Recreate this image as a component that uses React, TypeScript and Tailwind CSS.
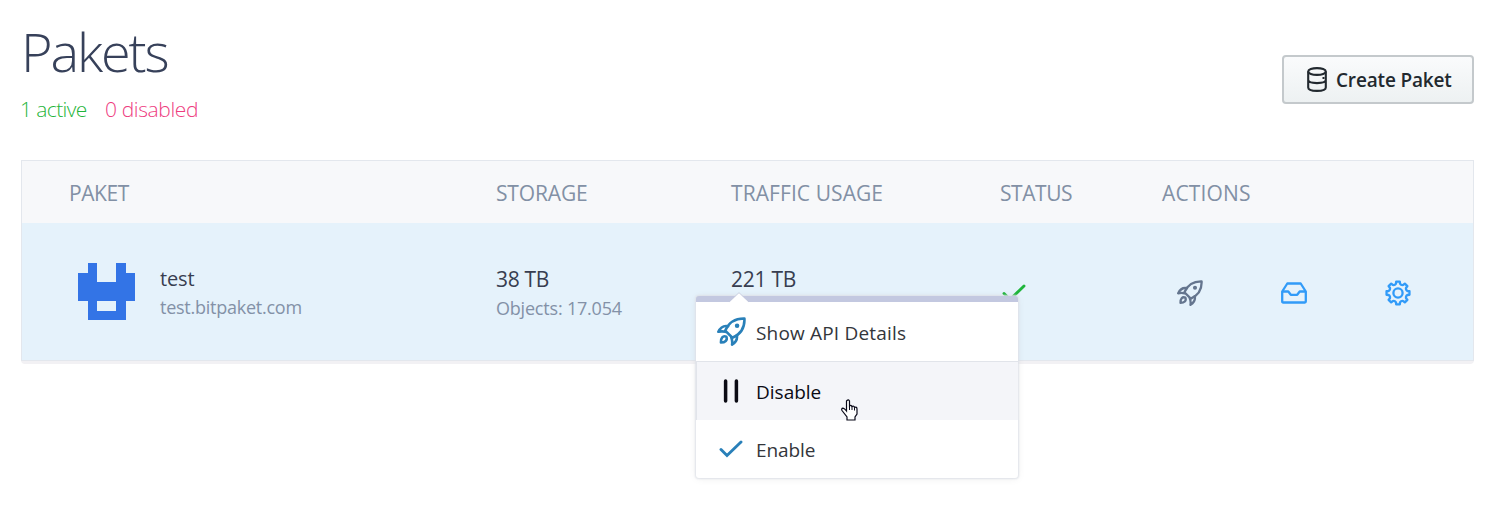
import React from "react";

function Rocket({ className, weight = 2.3 }: { className: string; weight?: number }) {
  return (
    <svg viewBox="0 0 26 26" className={className} fill="none" stroke="currentColor" strokeWidth={weight} strokeLinejoin="round" strokeLinecap="round">
      <path d="M24.6 1.400C15.500 1.200 10.600 4.800 7.400 12.200L13.800 18.600C21.200 15.400 25 10 24.600 1.400Z" />
      <path d="M10 8.200C6.200 7.400 3.200 9 1.200 13.300C3.600 12.700 5.700 12.800 7.600 13.300" />
      <path d="M17.800 16.200C18.400 19.500 17 22.700 13.500 24.800C13.900 22.300 13.600 20.400 12.800 18.400" />
      <path d="M8.400 17.600C5.200 16.400 3.300 18.700 3.500 22.900C7.200 22.900 9.700 21 8.400 17.600Z" />
      <circle cx="18" cy="7.800" r=".9" fill="currentColor" />
    </svg>
  );
}

function Inbox() {
  return (
    <svg viewBox="0 0 26 22" className="h-[22px] w-[26px]" fill="none" stroke="currentColor" strokeWidth="2.300" strokeLinejoin="round">
      <path d="M1.200 9.500L6.300 1.500H19.700L24.800 9.500V19.500Q24.800 20.500 23.800 20.500H2.200Q1.200 20.500 1.200 19.500Z" />
      <path d="M1.200 9.500H7.300L9.800 12.800H16.200L18.700 9.500H24.800" />
    </svg>
  );
}

const gearOutline = Array.from({ length: 8 }, (_, i) => {
  const at = (deg: number, r: number) => {
    const a = ((i * 45 + deg - 90) * Math.PI) / 180;
    return `${(13 + r * Math.cos(a)).toFixed(2)} ${(13 + r * Math.sin(a)).toFixed(2)}`;
  };
  return `${i ? "L" : "M"}${at(-9, 11.6)}L${at(9, 11.6)}L${at(12, 9.6)}Q${at(22.5, 8.2)} ${at(33, 9.6)}`;
}).join("") + "Z";

function Gear() {
  return (
    <svg viewBox="0 0 26 26" className="size-[26px]" fill="none" stroke="currentColor" strokeWidth="2.300" strokeLinejoin="round">
      <path d={gearOutline} />
      <circle cx="13" cy="13" r="4.600" />
    </svg>
  );
}

function Check({ className }: { className: string }) {
  return (
    <svg viewBox="0 0 24 18" className={className} fill="none" stroke="currentColor" strokeWidth="2.900" strokeLinecap="round">
      <path d="M2 9.500L8 15.500L22 2" />
    </svg>
  );
}

function Database() {
  return (
    <svg viewBox="0 0 20 25" className="h-[25px] w-5" fill="none" stroke="currentColor" strokeWidth="2.100">
      <ellipse cx="10" cy="4.500" rx="8.800" ry="3.400" />
      <path d="M1.200 4.500V20.500C1.200 25 18.800 25 18.800 20.500V4.500M1.200 12.800C1.200 17.200 18.800 17.200 18.800 12.800" />
      <path d="M15.500 11h2" strokeWidth="2" />
    </svg>
  );
}

function Avatar() {
  return (
    <svg viewBox="0 0 6 6" className="size-[57px]" shapeRendering="crispEdges">
      <path fill="#3374e6" fillRule="evenodd" d="M1 0H2V2H4V0H5V1H6V4H5V6H1V4H0V1H1ZM2 4V5H4V4Z" />
    </svg>
  );
}

function Pointer() {
  return (
    <svg viewBox="0 0 17 22" className="absolute left-[145px] top-[97px] h-[22px] w-[17px]">
      <path d="M6 1.500Q7.500 0 8.500 2V7Q10 5.500 11 7.500Q13 6.500 13.500 8.500Q16 7.500 16 10V15L14 18V21H6V18L1 11.500Q0 9.500 2 9.200Q3.500 9.500 5.500 12V2Z" fill="white" stroke="#080818" strokeWidth="1.200" />
      <path d="M8.500 6V11M11 7V11M13.500 8.500V11.500" stroke="#080818" />
    </svg>
  );
}

function Menu() {
  return (
    <div className="absolute left-[696px] top-[296px] h-[182px] w-[322px] rounded-[3px] border-t-6 border-t-[#c3c8e0] bg-white text-[19px] shadow-[0_0_2px_1px_#dfe2e8,0_1px_8px_rgba(0,0,0,0.06)]">
      <svg viewBox="0 0 20 11" className="absolute left-[33px] top-[-10px] h-[11px] w-5">
        <path d="M0 10.500L10 .700L20 10.500V11H0Z" fill="white" />
        <path d="M0 10L10 .700L20 10" fill="none" stroke="#c3c8dc" strokeWidth=".800" />
      </svg>
      <div className="flex h-[59px] items-center pl-[21px] text-[#33363b]">
        <Rocket className="size-[29px] text-[#2980b9]" />
        <span className="ml-[10px] pt-[4px] tracking-[0.180px]">Show API Details</span>
      </div>
      <div className="flex h-[59px] items-center border-l border-t border-[#e1e4ea] bg-[#f4f5f9] pl-[19px] text-[#0b0b14]">
        <svg viewBox="0 0 30 24" className="h-6 w-[30px]" stroke="currentColor" strokeWidth="3.500" strokeLinecap="round"><path d="M9.600 2V22M20.400 2V22" /></svg>
        <span className="ml-[10px] pt-[2px]">Disable</span>
      </div>
      <div className="flex h-[58px] items-center pl-[23px] text-[#33363b]">
        <Check className="h-[18px] w-6 text-[#2980b9]" />
        <span className="ml-[13px] pt-[2px] tracking-[-0.100px]">Enable</span>
      </div>
      <Pointer />
    </div>
  );
}

export default function App() {
  return (
    <main className="relative h-[515px] w-[1497px] overflow-hidden bg-white px-[21px] font-['Open_Sans','Noto_Sans',sans-serif]">
      <header className="flex h-[160px] items-start justify-between pr-[2px]">
        <div className="pt-[15px]">
          <h1 className="h-[72px] text-[54px] font-light leading-[72px] tracking-[-2.100px] text-[#37415a]">Pakets</h1>
          <div className="mt-[7px] flex h-[30px] text-[21px] font-light leading-[30px]">
            <span className="-ml-px w-[85px] tracking-[-0.600px] text-[#1fb53b]">1 active</span>
            <span className="tracking-[-0.380px] text-[#ee3d7f]">0 disabled</span>
          </div>
        </div>
        <button className="mt-[55px] flex h-[49px] w-[192px] items-center rounded-[4px] border-2 border-[#c4c9cc] bg-linear-to-b from-[#fafbfc] to-[#edf1f2] pl-[23px] text-[19px] font-semibold text-[#22292f]">
          <Database />
          <span className="ml-[9px] whitespace-nowrap pt-[2px] tracking-[-0.170px]">Create Paket</span>
        </button>
      </header>

      <section className="h-[204px] w-[1453px] rounded-b-[4px] bg-[#f2f1f4]">
        <div className="h-[201px] border border-[#e3e7ed] bg-[#e5f2fb]">
          <div className="grid h-[62px] grid-cols-[474px_235px_269px_162px_1fr] items-center bg-[#f7f8fa] pt-[4px] text-[21px] text-[#8290a5]">
            <span className="pl-[47px] tracking-[-0.400px]">PAKET</span>
            <span className="tracking-[-0.150px]">STORAGE</span>
            <span className="tracking-[0.080px]">TRAFFIC USAGE</span>
            <span className="tracking-[-0.450px]">STATUS</span>
            <span className="tracking-[0.150px]">ACTIONS</span>
          </div>
          <div className="grid h-[138px] grid-cols-[474px_235px_269px_162px_1fr] items-center">
            <div className="flex items-center pl-[56px]">
              <div className="pb-[2px]"><Avatar /></div>
              <div className="ml-[25px] pt-[2px]">
                <div className="text-[20px] leading-7 tracking-[-0.150px] text-[#383e50]">test</div>
                <div className="text-[18px] leading-7 tracking-[-0.250px] text-[#8391a7]">test.bitpaket.com</div>
              </div>
            </div>
            <div className="pt-[2px]">
              <div className="text-[21px] leading-[30px] tracking-[-0.300px] text-[#383e50]">38 TB</div>
              <div className="text-[18px] leading-7 tracking-[-0.200px] text-[#8391a7]">Objects: 17.054</div>
            </div>
            <div className="h-[56px] text-[21px] leading-[30px] tracking-[-0.250px] text-[#383e50]">221 TB</div>
            <Check className="ml-[2px] mt-[2px] h-[18px] w-6 text-[#1fb53b]" />
            <div className="flex items-center pl-[15px] pt-px">
              <Rocket className="size-[26px] text-[#64758e]" />
              <span className="ml-[78px] text-[#319bf8]"><Inbox /></span>
              <span className="ml-[78px] text-[#319bf8]"><Gear /></span>
            </div>
          </div>
        </div>
      </section>
      <Menu />
    </main>
  );
}
